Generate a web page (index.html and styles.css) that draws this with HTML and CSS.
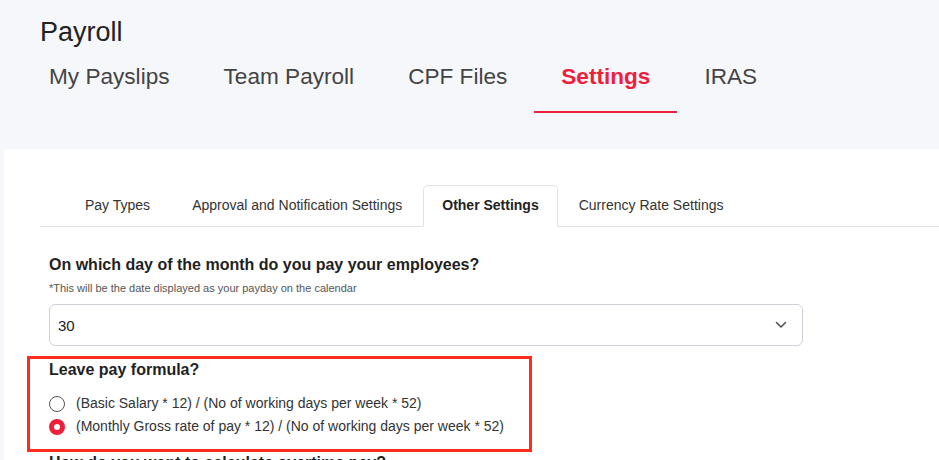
FILE: index.html
```html
<!DOCTYPE html>
<html lang="en">
<head>
<meta charset="utf-8">
<title>Payroll Settings</title>
<link rel="stylesheet" href="styles.css">
</head>
<body>
<header class="page-header">
  <h1 class="page-title">Payroll</h1>
  <nav class="main-nav">
    <a class="main-tab">My Payslips</a>
    <a class="main-tab">Team Payroll</a>
    <a class="main-tab">CPF Files</a>
    <a class="main-tab active">Settings</a>
    <a class="main-tab">IRAS</a>
  </nav>
</header>
<main class="card">
  <ul class="sub-tabs">
    <li class="sub-tab">Pay Types</li>
    <li class="sub-tab">Approval and Notification Settings</li>
    <li class="sub-tab active">Other Settings</li>
    <li class="sub-tab">Currency Rate Settings</li>
  </ul>
  <section class="form">
    <h2 class="question">On which day of the month do you pay your employees?</h2>
    <p class="hint">*This will be the date displayed as your payday on the calendar</p>
    <div class="select">
      <span class="select-value">30</span>
      <svg class="chevron" width="12" height="8" viewBox="0 0 12 8"><polyline points="1.5,1.5 6,6 10.5,1.5" fill="none" stroke="#555" stroke-width="1.6" stroke-linecap="round" stroke-linejoin="round"/></svg>
    </div>
    <div class="highlight">
      <h2 class="question">Leave pay formula?</h2>
      <div class="radio-row"><span class="radio"></span><span class="radio-label">(Basic Salary * 12) / (No of working days per week * 52)</span></div>
      <div class="radio-row"><span class="radio checked"></span><span class="radio-label">(Monthly Gross rate of pay * 12) / (No of working days per week * 52)</span></div>
    </div>
    <h2 class="question next">How do you want to calculate overtime pay?</h2>
  </section>
</main>
</body>
</html>
```
FILE: styles.css
```css
* { box-sizing: border-box; }
html, body { margin: 0; padding: 0; }
body {
  background: #f6f7fb;
  font-family: "Liberation Sans", Arial, Helvetica, sans-serif;
  color: #222;
  height: 460px;
  overflow: hidden;
}
.page-header {
  padding: 17px 0 0 22px;
}
.page-title {
  margin: 0 0 0 18px;
  font-size: 27px;
  line-height: 30px;
  font-weight: 400;
  color: #222;
}
.main-nav {
  display: flex;
}
.main-tab {
  display: block;
  padding: 17px 27px 21px;
  font-size: 22.6px;
  line-height: 26px;
  color: #444;
  border-bottom: 2px solid transparent;
}
.main-tab.active {
  color: #ee1f3b;
  font-weight: 700;
  border-bottom-color: #ee1f3b;
}
.card {
  margin: 36px 0 0 4px;
  background: #fff;
  padding: 36px 0 40px 36px;
  min-height: 400px;
}
.sub-tabs {
  display: flex;
  list-style: none;
  margin: 0;
  padding: 0 0 0 24px;
  border-bottom: 1px solid #e0e2e7;
}
.sub-tab {
  padding: 11px 20px 12px;
  font-size: 14px;
  line-height: 17px;
  color: #333;
  border: 1px solid transparent;
  border-radius: 5px 5px 0 0;
  margin-bottom: -1px;
}
.sub-tab.active {
  border-color: #e0e2e7 #e0e2e7 #fff;
  background: #fff;
  color: #222;
  font-weight: 700;
  padding: 11px 18px 12px;
}
.form {
  margin-left: 9px;
  width: 754px;
}
.question {
  margin: 28px 0 0;
  font-size: 16px;
  line-height: 20px;
  font-weight: 700;
  color: #1f1f1f;
}
.hint {
  margin: 6px 0 0;
  font-size: 11px;
  line-height: 14px;
  color: #555;
}
.select {
  margin-top: 9px;
  height: 42px;
  border: 1px solid #cdd1d8;
  border-radius: 6px;
  display: flex;
  align-items: center;
  justify-content: space-between;
  padding: 0 15px 0 8px;
}
.select-value {
  font-size: 15px;
  color: #222;
}
.chevron { display: block; }
.highlight {
  margin: 10px 0 0 -22px;
  width: 505px;
  border: 3px solid #fe2c1c;
  padding: 1px 0 11px 19px;
}
.highlight .question {
  margin-top: 0;
}
.radio-row {
  display: flex;
  align-items: center;
  height: 23px;
  gap: 11px;
}
.highlight .question + .radio-row { margin-top: 12px; }
.radio {
  width: 16px;
  height: 16px;
  border-radius: 50%;
  border: 1px solid #555;
  background: #fff;
  flex: none;
}
.radio.checked {
  border: 5px solid #ee1f3b;
}
.radio-label {
  font-size: 14px;
  line-height: 17px;
  color: #333;
}
.question.next {
  margin-top: 1px;
}
```
